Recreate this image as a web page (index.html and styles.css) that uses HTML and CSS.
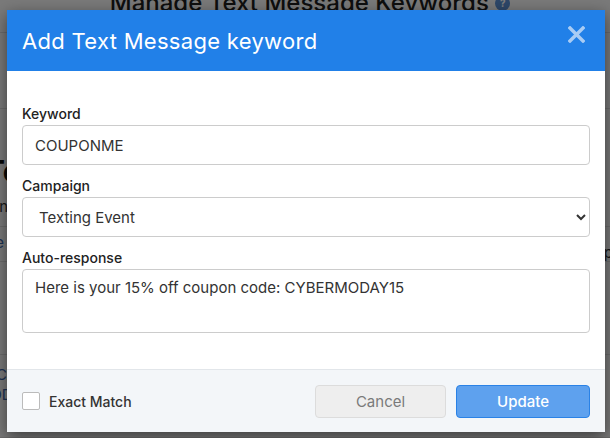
FILE: index.html
```html
<!DOCTYPE html>
<html>
<head>
<meta charset="utf-8">
<link rel="stylesheet" href="styles.css">
</head>
<body>
<div class="page">
  <div class="bg-head">
    <h1 class="bg-title">Manage Text Message Keywords <span class="help">?</span></h1>
  </div>
  <div class="bg-row r1"></div>
  <div class="bg-row r2">
    <div class="bg-big">Te</div>
    <div class="bg-small">Then</div>
  </div>
  <div class="bg-row r3"><span class="bg-link">like</span><span class="bg-p">p</span></div>
  <div class="bg-row r4"></div>
  <div class="bg-row r5">
    <div class="bg-link l1">CA</div>
    <div class="bg-link l2">DD</div>
  </div>
</div>
<div class="backdrop"></div>
<div class="modal">
  <div class="modal-header">
    <h2 class="modal-title">Add Text Message keyword</h2>
    <svg class="close" width="17" height="17" viewBox="0 0 17 17"><path d="M2 2 L15 15 M15 2 L2 15" stroke="#a9ccf4" stroke-width="3.4" stroke-linecap="square"/></svg>
  </div>
  <div class="modal-body">
    <label class="field-label">Keyword</label>
    <input class="field" type="text" value="COUPONME">
    <label class="field-label">Campaign</label>
    <select class="field select"><option>Texting Event</option></select>
    <label class="field-label">Auto-response</label>
    <textarea class="field area">Here is your 15% off coupon code: CYBERMODAY15</textarea>
  </div>
  <div class="modal-footer">
    <label class="check"><span class="box"></span>Exact Match</label>
    <div class="buttons">
      <button class="btn cancel">Cancel</button>
      <button class="btn update">Update</button>
    </div>
  </div>
</div>
</body>
</html>
```
FILE: styles.css
```css
* { box-sizing: border-box; }
body {
  margin: 0;
  width: 610px;
  height: 438px;
  overflow: hidden;
  position: relative;
  background: #f4f4f4;
  font-family: Inter, "Open Sans", sans-serif;
}
.page { height: 438px; overflow: hidden; }
.bg-head {
  height: 33px;
  border-bottom: 1px solid #d8d8d8;
  display: flex;
  justify-content: center;
}
.bg-title {
  margin: -12px 0 0 0;
  font-size: 24px;
  line-height: 30px;
  font-weight: 500;
  color: #1c1c1c;
  padding-left: 10px;
}
.help {
  display: inline-block;
  width: 15px;
  height: 15px;
  border-radius: 50%;
  background: #5a8fd2;
  color: #fff;
  font-size: 10px;
  line-height: 15px;
  text-align: center;
  vertical-align: 4px;
  font-weight: 700;
}
.bg-row { border-bottom: 1px solid #d8d8d8; position: relative; }
.r1 { height: 76px; }
.r2 { height: 118px; padding-top: 44px; }
.r3 { height: 35px; padding-top: 6px; display: flex; justify-content: space-between; }
.r4 { height: 93px; }
.r5 { height: 83px; padding-top: 10px; }
.bg-big { font-size: 30px; font-weight: 700; color: #111; margin-left: -15px; line-height: 36px; }
.bg-small { font-size: 15px; color: #333; margin-left: -28px; margin-top: 8px; }
.bg-link { color: #3a64a8; font-size: 15px; margin-left: -20px; }
.bg-p { font-size: 15px; color: #333; margin-right: -3px; margin-top: 10px; }
.l1 { margin-left: -4px; line-height: 20px; }
.l2 { margin-left: -9px; line-height: 20px; }
.backdrop {
  position: absolute;
  inset: 0;
  background: rgba(0, 0, 0, 0.5);
}
.modal {
  position: absolute;
  left: 7px;
  top: 10px;
  width: 598px;
  background: #fff;
  box-shadow: 0 5px 15px rgba(0, 0, 0, 0.5);
}
.modal-header {
  height: 61px;
  background: #2180e8;
  display: flex;
  align-items: center;
  justify-content: space-between;
  padding: 0 20px 0 15px;
}
.close { margin-top: -12px; }
.modal-title {
  margin: 0;
  color: #fff;
  font-size: 22px;
  font-weight: 400;
  letter-spacing: 0.3px;
}
.modal-body {
  padding: 32px 15px 36px 15px;
  display: flex;
  flex-direction: column;
}
.field-label {
  font-size: 14px;
  font-weight: 500;
  color: #222;
  line-height: 21px;
  margin-bottom: 1px;
}
.field {
  width: 568px;
  height: 40px;
  border: 1px solid #ccc;
  border-radius: 4px;
  padding: 0 12px;
  font-family: Inter, "Open Sans", sans-serif;
  font-size: 15px;
  color: #333;
  background: #fff;
  margin-bottom: 10px;
}
.select { padding-left: 12px; color: #333; }
.area {
  height: 64px;
  padding-top: 7px;
  resize: none;
  margin-bottom: 0;
  line-height: 22px;
}
.modal-footer {
  border-top: 1px solid #e2e6ea;
  background: #f3f6f9;
  height: 63px;
  display: flex;
  align-items: center;
  justify-content: space-between;
  padding: 0 15px;
}
.check {
  display: flex;
  align-items: center;
  gap: 9px;
  font-size: 14px;
  font-weight: 500;
  color: #333;
}
.box {
  width: 18px;
  height: 18px;
  border: 1px solid #bbb;
  border-radius: 2px;
  background: #fff;
}
.buttons { display: flex; gap: 10px; }
.btn {
  height: 33px;
  border-radius: 4px;
  font-family: Inter, "Open Sans", sans-serif;
  font-size: 15px;
}
.cancel {
  width: 131px;
  background: #eeeeee;
  border: 1px solid #dcdcdc;
  color: #7a7a7a;
}
.update {
  width: 134px;
  background: #5ea1ee;
  border: 1px solid #2a82e6;
  color: #fff;
  font-weight: 500;
}
```
